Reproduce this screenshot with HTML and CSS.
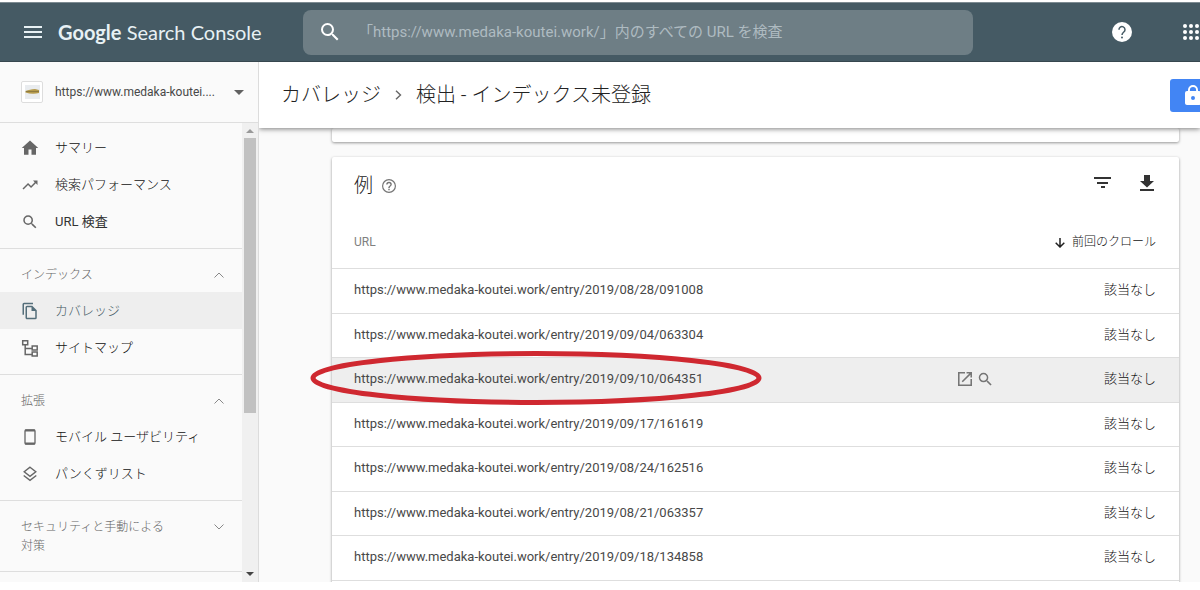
FILE: index.html
```html
<!DOCTYPE html>
<html lang="ja">
<head>
<meta charset="utf-8">
<title>Google Search Console</title>
<link rel="stylesheet" href="styles.css">
</head>
<body>
<div class="app">
  <header class="topbar">
    <div class="brand">
      <button class="icon-btn" aria-label="メニュー"><svg width="18" height="14" viewBox="0 0 18 14" fill="none" stroke="#e8f1f4" stroke-width="2"><path d="M0 2h18M0 7h18M0 12h18"/></svg></button>
      <span class="logo"><b>Google</b> Search Console</span>
    </div>
    <label class="search">
      <svg width="24" height="24" viewBox="0 0 24 24" fill="#fff"><path d="M15.5 14h-.79l-.28-.27A6.47 6.47 0 0 0 16 9.500 6.500 6.500 0 1 0 9.500 16c1.610 0 3.090-.59 4.230-1.570l.27.28v.79l5 4.990L20.490 19l-4.990-5zm-6 0C7.010 14 5 11.990 5 9.500S7.010 5 9.500 5 14 7.010 14 9.500 11.990 14 9.500 14z"/></svg>
      <input type="text" aria-label="URL 検査" placeholder="「https://www.medaka-koutei.work/」内のすべての URL を検査">
    </label>
    <div class="tools">
      <button class="icon-btn" aria-label="ヘルプ"><svg width="20" height="20" viewBox="0 0 20 20"><circle cx="10" cy="10" r="10" fill="#fff"/><path d="M7 7.800a3 3 0 1 1 4.800 2.200C10.600 11 10 11.500 10 13" fill="none" stroke="#455a64" stroke-width="1.500"/><circle cx="10" cy="15.500" r="1" fill="#455a64"/></svg></button>
      <button class="icon-btn" aria-label="アプリ"><svg width="16" height="16" viewBox="0 0 16 16" fill="#fff"><circle cx="2" cy="2" r="2"/><circle cx="8" cy="2" r="2"/><circle cx="14" cy="2" r="2"/><circle cx="2" cy="8" r="2"/><circle cx="8" cy="8" r="2"/><circle cx="14" cy="8" r="2"/><circle cx="2" cy="14" r="2"/><circle cx="8" cy="14" r="2"/><circle cx="14" cy="14" r="2"/></svg></button>
    </div>
  </header>

  <div class="body">
    <aside class="sidebar">
      <button class="property">
        <svg class="thumb" width="22" height="22" viewBox="0 0 22 22"><rect x=".5" y=".5" width="21" height="21" rx="1.500" fill="#fff" stroke="#ddd"/><rect x="4" y="4" width="15" height="14" fill="#e9ecef"/><path d="M4.500 10c3-1 6-2 9.500-2l4 1v3c-4 1-9 1-13.500-.5z" fill="#b59a4c"/><path d="M5 10.500h13" stroke="#8d7a3f"/></svg>
        <span class="property-name">https://www.medaka-koutei....</span>
        <svg width="10" height="5" viewBox="0 0 10 5" fill="#616161"><path d="M0 0h10L5 5z"/></svg>
      </button>
      <div class="side-scroll">
        <nav class="nav">
          <section class="group">
            <a class="item" href="#"><svg width="18" height="18" viewBox="0 0 24 24" fill="#666"><path d="M10 21v-7h4v7h6v-9h3L12 2 1 12h3v9z"/></svg>サマリー</a>
            <a class="item" href="#"><svg width="18" height="18" viewBox="0 0 24 24" fill="#666"><path d="M16 6l2.290 2.290-4.880 4.880-4-4L2 16.590 3.410 18l6-6 4 4 6.300-6.290L22 12V6z"/></svg>検索パフォーマンス</a>
            <a class="item strong" href="#"><svg width="18" height="18" viewBox="0 0 24 24" fill="#666"><path d="M15.500 14h-.79l-.28-.27A6.470 6.470 0 0 0 16 9.500 6.500 6.500 0 1 0 9.500 16c1.610 0 3.090-.59 4.230-1.570l.27.28v.79l5 4.990L20.490 19l-4.990-5zm-6 0C7.010 14 5 11.990 5 9.500S7.010 5 9.500 5 14 7.010 14 9.500 11.990 14 9.500 14z"/></svg>URL 検査</a>
          </section>
          <section class="group">
            <button class="head">インデックス<svg width="10" height="6" viewBox="0 0 10 6" fill="none" stroke="#888"><path d="M.5 5.500L5 1l4.500 4.500"/></svg></button>
            <a class="item active" href="#"><svg width="18" height="18" viewBox="0 0 24 24" fill="#546e7a"><path d="M16 1H4a2 2 0 0 0-2 2v14h2V3h12V1zm-1 4H8a2 2 0 0 0-2 2v14c0 1.100.9 2 2 2h11a2 2 0 0 0 2-2V11l-6-6zM8 21V7h6v5h5v9H8z"/></svg>カバレッジ</a>
            <a class="item" href="#"><svg width="18" height="18" viewBox="0 0 18 18" fill="none" stroke="#666" stroke-width="1.500"><path d="M1.700 1.700h5v4h-5zM11.200 7h5v4h-5zM11.200 13h5v4h-5zM4.200 6v9.500h7M4.200 9.500h7"/></svg>サイトマップ</a>
          </section>
          <section class="group">
            <button class="head">拡張<svg width="10" height="6" viewBox="0 0 10 6" fill="none" stroke="#888"><path d="M.5 5.500L5 1l4.500 4.500"/></svg></button>
            <a class="item" href="#"><svg width="18" height="18" viewBox="0 0 18 18" fill="none" stroke="#666"><rect x="4" y="2" width="10" height="14" rx="1" stroke-width="1.300"/><path d="M4 2.500h10M4 15.500h10" stroke-width="2"/></svg>モバイル ユーザビリティ</a>
            <a class="item" href="#"><svg width="18" height="18" viewBox="0 0 18 18" fill="none" stroke="#666" stroke-width="1.400"><path d="M9 2.200l5.800 4.600L9 11.300 3.200 6.800zM2.700 10.500L9 15.400l6.300-4.900"/></svg>パンくずリスト</a>
          </section>
          <section class="group">
            <button class="head tall"><span>セキュリティと手動による対策</span><svg width="10" height="6" viewBox="0 0 10 6" fill="none" stroke="#888"><path d="M.5.5L5 5 9.500.5"/></svg></button>
          </section>
        </nav>
        <div class="scrollbar">
          <svg width="8" height="4" viewBox="0 0 8 4" fill="#999"><path d="M0 4h8L4 0z"/></svg>
          <div class="track"><div class="grip"></div></div>
          <svg width="8" height="4" viewBox="0 0 8 4" fill="#444"><path d="M0 0h8L4 4z"/></svg>
        </div>
      </div>
    </aside>

    <main class="main">
      <div class="titlebar">
        <h1 class="crumbs"><span>カバレッジ</span><svg width="7" height="10" viewBox="0 0 7 10" fill="none" stroke="#666" stroke-width="1.400"><path d="M1 .7L5.500 5 1 9.300"/></svg><span>検出 - インデックス未登録</span></h1>
        <button class="lock" aria-label="共有"><svg width="24" height="24" viewBox="0 0 24 24" fill="#fff"><path fill-rule="evenodd" d="M18 8h-1V7A5 5 0 0 0 7 7v1H6a2 2 0 0 0-2 2v10c0 1.100.9 2 2 2h12a2 2 0 0 0 2-2V10a2 2 0 0 0-2-2zM12 17a2 2 0 1 1 0-4 2 2 0 0 1 0 4zm3.100-9H8.900V7a3.100 3.100 0 0 1 6.200 0v1z"/></svg></button>
      </div>
      <div class="content">
        <div class="card stub"></div>
        <section class="card">
          <div class="card-head">
            <h2>例</h2>
            <svg width="14" height="14" viewBox="2 2 20 20" fill="#757575"><path d="M11 18h2v-2h-2v2zm1-16a10 10 0 1 0 0 20 10 10 0 0 0 0-20zm0 18.300a8.300 8.300 0 1 1 0-16.600 8.300 8.300 0 0 1 0 16.600zM12 6a4 4 0 0 0-4 4h2c0-1.100.9-2 2-2s2 .9 2 2c0 2-3 1.750-3 5h2c0-2.250 3-2.500 3-5a4 4 0 0 0-4-4z"/></svg>
            <div class="card-tools">
              <button class="icon-btn" aria-label="フィルタ"><svg width="18" height="18" viewBox="0 0 18 18" fill="none" stroke="#333" stroke-width="2"><path d="M1 4h17M4 9h11M8 13h4"/></svg></button>
              <button class="icon-btn" aria-label="ダウンロード"><svg width="14" height="18" viewBox="0 0 14 18" fill="#333"><path d="M4 1h6v6h4l-7 6.500L0 7h4zM0 15h14v2H0z"/></svg></button>
            </div>
          </div>
          <table class="urls">
            <thead><tr><th>URL</th><th class="acts"></th><th class="crawl"><svg width="10" height="10" viewBox="0 0 10 10" fill="none" stroke="#222" stroke-width="1.500"><path d="M5 0v9M.7 4.800L5 9l4.300-4.200"/></svg>前回のクロール</th></tr></thead>
            <tbody>
              <tr><td>https://www.medaka-koutei.work/entry/2019/08/28/091008</td><td class="acts"></td><td class="crawl">該当なし</td></tr>
              <tr><td>https://www.medaka-koutei.work/entry/2019/09/04/063304</td><td class="acts"></td><td class="crawl">該当なし</td></tr>
              <tr class="hover"><td><span class="marked">https://www.medaka-koutei.work/entry/2019/09/10/064351<svg class="ring" width="452" height="54" viewBox="0 0 452 54" fill="none" stroke="#cf2830" stroke-width="5"><ellipse cx="226" cy="27" rx="223" ry="24.500"/></svg></span></td><td class="acts"><svg width="14" height="14" viewBox="3 3 18 18" fill="#757575"><path d="M19 19H5V5h7V3H3v18h18v-9h-2v7zM14 3v2h3.590l-9.830 9.830 1.410 1.410L19 6.410V10h2V3h-7z"/></svg><svg width="14" height="14" viewBox="2 2 19 19" fill="#757575"><path d="M15.500 14h-.79l-.28-.27A6.470 6.470 0 0 0 16 9.500 6.500 6.500 0 1 0 9.500 16c1.610 0 3.090-.59 4.230-1.570l.27.28v.79l5 4.990L20.490 19l-4.990-5zm-6 0C7.010 14 5 11.990 5 9.500S7.010 5 9.500 5 14 7.010 14 9.500 11.990 14 9.500 14z"/></svg></td><td class="crawl">該当なし</td></tr>
              <tr><td>https://www.medaka-koutei.work/entry/2019/09/17/161619</td><td class="acts"></td><td class="crawl">該当なし</td></tr>
              <tr><td>https://www.medaka-koutei.work/entry/2019/08/24/162516</td><td class="acts"></td><td class="crawl">該当なし</td></tr>
              <tr><td>https://www.medaka-koutei.work/entry/2019/08/21/063357</td><td class="acts"></td><td class="crawl">該当なし</td></tr>
              <tr><td>https://www.medaka-koutei.work/entry/2019/09/18/134858</td><td class="acts"></td><td class="crawl">該当なし</td></tr>
              <tr><td></td><td class="acts"></td><td class="crawl"></td></tr>
            </tbody>
          </table>
        </section>
      </div>
    </main>
  </div>
</div>
</body>
</html>
```
FILE: styles.css
```css
* { box-sizing: border-box; }
body { margin: 0; background: #fff; color: #484848; font: 13px/20px Roboto, "Noto Sans CJK JP", sans-serif; }
button { border: 0; background: none; padding: 0; margin: 0; font: inherit; color: inherit; text-align: left; }
svg { display: block; flex: none; }
a { color: inherit; text-decoration: none; }

.app { height: 100vh; padding: 2px 0 8px; display: flex; flex-direction: column; overflow: hidden; }
.topbar { flex: none; height: 60px; display: flex; align-items: center; background: #455a64; border-top: 1px solid #7d8b92; border-bottom: 1px solid #37474f; color: #fff; }
.brand { flex: none; width: 303px; padding-left: 24px; display: flex; align-items: center; gap: 16px; }
.logo { font: 400 20px/30px Lato, sans-serif; color: #e8f1f4; white-space: nowrap; }
.logo b { font-weight: 700; }
.search { flex: 0 1 670px; height: 45px; padding: 0 16px 0 15px; display: flex; align-items: center; gap: 16px; border-radius: 8px; background: #6e7e85; }
.search input { flex: 1; min-width: 0; border: 0; padding: 0; outline: 0; background: none; color: #fff; font: 400 15px/24px Roboto, "Noto Sans CJK JP", sans-serif; }
.search input::placeholder { color: #aebbc1; opacity: 1; }
.tools { margin-left: auto; display: flex; align-items: center; gap: 51px; padding-right: 1px; }

.body { flex: 1; min-height: 0; display: flex; }
.sidebar { flex: none; width: 259px; display: flex; flex-direction: column; background: #fafafa; border-right: 1px solid #dcdcdc; }
.property { flex: none; height: 61px; padding: 0 14px 0 21px; display: flex; align-items: center; border-bottom: 1px solid #dedede; font-size: 12px; }
.property-name { flex: 1; padding-left: 12px; white-space: nowrap; }
.side-scroll { flex: 1; min-height: 0; display: flex; }
.nav { flex: 1; overflow: hidden; font-weight: 300; }
.group { padding: 6px 0 8px; border-bottom: 1px solid #dedede; }
.item { height: 37px; padding-left: 21px; display: flex; align-items: center; gap: 16px; color: #111; }
.strong { font-weight: 400; color: #333; }
.active { background: #eee; color: #455a64; }
.head { width: 100%; height: 37px; padding: 3px 18px 0 21px; display: flex; align-items: center; justify-content: space-between; color: #666; font-size: 12px; line-height: 19px; }
.tall { height: 56px; }
.tall span { width: 146px; }
.tall svg { margin-bottom: 20px; }
.scrollbar { flex: none; width: 16px; padding: 6px 0; background: #f0f0f0; display: flex; flex-direction: column; align-items: center; gap: 5px; }
.track { flex: 1; width: 12px; }
.grip { height: 64%; background: #c1c1c1; }

.main { flex: 1; min-width: 0; display: flex; flex-direction: column; background: #fafafa; overflow: hidden; }
.titlebar { flex: none; position: relative; z-index: 1; height: 66px; padding-left: 22px; display: flex; align-items: center; justify-content: space-between; background: #fff; box-shadow: 0 1px 5px rgba(0, 0, 0, .5); }
.crumbs { margin: 0; display: flex; align-items: center; gap: 14px; font-size: 20px; line-height: 28px; font-weight: 300; color: #222; white-space: nowrap; }
.lock { height: 33px; width: 46px; padding-left: 11px; margin-right: -16px; border-radius: 3px; background: #4285f4; }
.content { padding: 0 21px 0 73px; display: flex; flex-direction: column; gap: 15px; }
.card { background: #fff; border-radius: 2px; box-shadow: 0 1px 3px rgba(0, 0, 0, .4); }
.stub { height: 14px; }
.card-head { height: 58px; padding: 0 25px 0 22px; display: flex; align-items: center; gap: 9px; }
.card-head h2 { margin: 0; font-size: 19px; line-height: 28px; font-weight: 300; color: #222; }
.card-tools { margin-left: auto; padding-bottom: 6px; display: flex; align-items: center; gap: 29px; }
.urls { width: 100%; border-collapse: collapse; table-layout: fixed; }
.urls th { height: 53px; padding: 1px 0 0 22px; text-align: left; font-size: 12px; font-weight: 400; color: #808080; border-bottom: 1px solid #dedede; }
.urls td { height: 44px; padding: 0 0 1px 22px; border-bottom: 1px solid #dedede; white-space: nowrap; }
.urls tr:nth-child(odd) td { height: 45px; }
.urls .acts { width: 60px; padding: 0 0 2px; text-align: right; }
.acts svg { display: inline-block; vertical-align: middle; margin-left: 6px; }
.urls .crawl { width: 187px; padding: 0 23px 1px 0; text-align: right; font-weight: 300; color: #111; }
.urls th.crawl { padding: 1px 23px 0 0; }
.crawl svg { display: inline-block; vertical-align: middle; margin-right: 7px; }
.hover { background: #eee; }
.marked { position: relative; }
.ring { position: absolute; left: -44px; top: -20px; pointer-events: none; }
```
